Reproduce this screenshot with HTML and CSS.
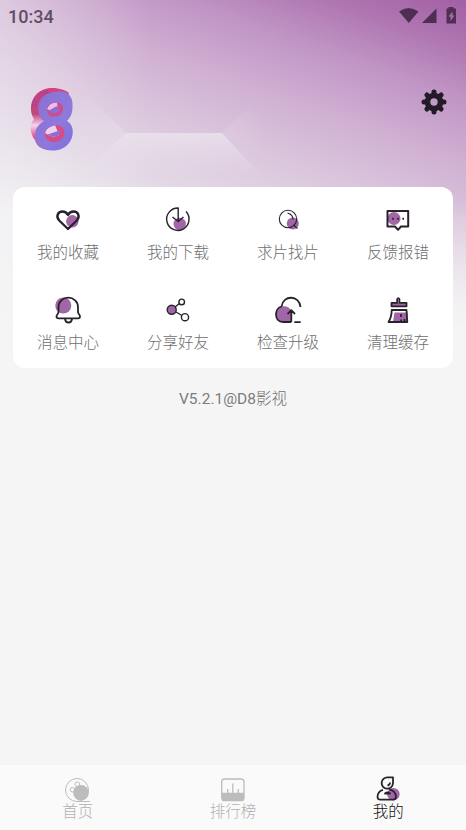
FILE: index.html
```html
<!DOCTYPE html>
<html lang="zh-CN">
<head>
<meta charset="utf-8">
<meta name="viewport" content="width=device-width, initial-scale=1">
<title>我的</title>
<link rel="stylesheet" href="styles.css">
</head>
<body>
<div class="app">
  <svg class="backdrop" viewBox="0 0 466 330" aria-hidden="true">
    <defs>
      <linearGradient id="sky" gradientUnits="userSpaceOnUse" x1="466" y1="0" x2="350" y2="331">
        <stop offset="0" stop-color="#a25fa4"/>
        <stop offset=".13" stop-color="#af76b2"/>
        <stop offset=".28" stop-color="#c197c5"/>
        <stop offset=".44" stop-color="#d0b0d3"/>
        <stop offset=".6" stop-color="#dac5dc"/>
        <stop offset=".78" stop-color="#e3d8e5"/>
        <stop offset=".9" stop-color="#ebe7ed"/>
        <stop offset="1" stop-color="#f3f2f4"/>
      </linearGradient>
      <linearGradient id="left" gradientUnits="userSpaceOnUse" x1="0" y1="0" x2="150" y2="0">
        <stop offset="0" stop-color="#f1eff3" stop-opacity=".4"/>
        <stop offset="1" stop-color="#f1eff3" stop-opacity="0"/>
      </linearGradient>
      <linearGradient id="fade" x1="0" y1="0" x2="0" y2="1">
        <stop offset="0" stop-color="#f5f5f5" stop-opacity="0"/>
        <stop offset="1" stop-color="#f5f5f5"/>
      </linearGradient>
      <linearGradient id="plate" x1="0" y1="0" x2="0" y2="1">
        <stop offset="0" stop-color="#ebe3ed" stop-opacity=".85"/>
        <stop offset=".8" stop-color="#e9e3ea" stop-opacity="0"/>
      </linearGradient>
      <radialGradient id="slope" gradientUnits="userSpaceOnUse" cx="120" cy="132" r="52">
        <stop offset="0" stop-color="#e8deea" stop-opacity=".5"/>
        <stop offset="1" stop-color="#e8deea" stop-opacity="0"/>
      </radialGradient>
      <radialGradient id="shade" gradientUnits="userSpaceOnUse" cx="224" cy="133" r="42">
        <stop offset="0" stop-color="#e6d8e8" stop-opacity=".3"/>
        <stop offset="1" stop-color="#e6d8e8" stop-opacity="0"/>
      </radialGradient>
    </defs>
    <rect width="466" height="330" fill="url(#sky)"/>
    <rect width="150" height="330" fill="url(#left)"/>
    <rect y="200" width="466" height="130" fill="url(#fade)"/>
    <path d="M68 76 126 133 66 187V76z" fill="url(#slope)"/>
    <path d="M222 133 268 87V180z" fill="url(#shade)"/>
    <path d="M126 133H222L272 187H66z" fill="url(#plate)"/>
  </svg>

  <header class="status">
    <span class="clock">10:34</span>
    <svg class="signals" viewBox="0 0 60 18" aria-hidden="true">
      <path d="M1 4.500Q10.500-2.500 20.500 4.500L10.800 16z"/>
      <path d="M38.500 1.500V16H24z"/>
      <path d="M50.500 0h5v1.500h2.500V16.500h-9.500V1.500h2zM54.500 4.500l-4 5h2v4.500l4-5.500h-2z" fill-rule="evenodd"/>
    </svg>
  </header>

  <section class="profile">
    <svg class="avatar" viewBox="0 0 46 66" aria-label="8">
      <defs>
        <linearGradient id="side" x1="0" y1="0" x2="0" y2="1">
          <stop offset="0" stop-color="#d8417e"/><stop offset=".42" stop-color="#c0467f"/>
          <stop offset=".6" stop-color="#f3d3ee"/><stop offset=".78" stop-color="#e2588f"/><stop offset="1" stop-color="#a44fb5"/>
        </linearGradient>
        <linearGradient id="face" x1="0" y1="0" x2="1" y2="1">
          <stop offset="0" stop-color="#8a6fd2"/><stop offset=".6" stop-color="#8e79dd"/><stop offset="1" stop-color="#7d70dc"/>
        </linearGradient>
      </defs>
      <path d="M18 1.500C28 0 36 3 40 6L20 63C10 62 7 57 6 53C1 47 0 38 5 32C-1 24 1 5 18 1.500z" fill="url(#side)"/>
      <path d="M6 20C8 10 14 7 20 5M3 20C4 10 12 5 19 3.500" fill="none" stroke="#8a4a96"/>
      <ellipse cx="26" cy="22" rx="9.500" ry="9" fill="#cc4d8a"/>
      <ellipse cx="26" cy="47" rx="11" ry="10" fill="#d64c86"/>
      <path d="M18 22Q21 15 28 15.500L29 24Q23 25 18 22z" fill="#efbde5"/>
      <path d="M16 46Q18 39 26 38L30 48Q24 52 16 46z" fill="#f1d0ea"/>
      <path d="M19 24l9-5 3 5-6 3zM17 48l9-3 7-2-5 7z" fill="#8f6dd0"/>
      <path fill="url(#face)" fill-rule="evenodd" d="M28 4.500C38 3 44.500 9 43.500 20C43.500 27 41 31 38 34C43 37 44.500 42 43.500 48C42 57 35 62.500 26 63.500C14 64.500 6 58 6 49C6 41 10 37 15 34C8 29 7 15 15 9C19 6 24 5 28 4.500zM26.500 15.500C21 16 17.500 19 18 23.500C18.500 28 22 30 26.500 29.500C31 29 34 26 34 21.500C34 17 31 15 26.500 15.500zM26 38.500C20 39.500 15.500 43 16 48C16.500 53 21 55.500 26 55C31.500 54.500 36 50 35.500 45C35 40 31 37.500 26 38.500z"/>
    </svg>
    <svg class="gear" viewBox="-13 -13 26 26" aria-label="设置">
      <g fill="none" stroke="#241b28" stroke-width="5" stroke-linecap="round">
        <path d="M0-10V-7M0 10V7M-10 0H-7M10 0H7M-7.100-7.100-5-5M7.100-7.100 5-5M-7.100 7.100-5 5M7.100 7.100 5 5"/>
        <circle r="6.500" stroke-width="5.600"/>
      </g>
    </svg>
  </section>

  <main class="menu">
    <a class="item">
      <svg viewBox="0 0 30 30"><circle class="dot" cx="19.300" cy="17.300" r="6.200"/><path class="line bold" d="M15 25 6.200 16.500C2.500 12.500 5 7.500 9.300 7.500C12 7.500 14 9 15 11C16 9 18 7.500 20.700 7.500C25 7.500 27.500 12.500 23.800 16.500z"/></svg>
      <span>我的收藏</span>
    </a>
    <a class="item">
      <svg viewBox="0 0 30 30"><circle class="dot" cx="16.700" cy="20" r="6.200"/><path class="line thin" d="M15.200 17.500V4A11.200 11.200 0 1 0 23 7.500M9.500 13 15.200 17.500 20.500 13"/></svg>
      <span>我的下载</span>
    </a>
    <a class="item">
      <svg viewBox="0 0 30 30"><circle class="dot" cx="19.800" cy="19.500" r="6"/><g class="line hair"><circle cx="15" cy="15" r="8.700"/><path d="M14.500 9Q20 10.500 20 15.500M20.500 21 24.500 24.500"/></g></svg>
      <span>求片找片</span>
    </a>
    <a class="item">
      <svg viewBox="0 0 30 30"><circle class="dot" cx="11" cy="14.500" r="6.500"/><path class="line thick" d="M4.500 7H25.200V22.500H18L15 25.800 12 22.500H4.500z"/><path class="line thick" d="M9.200 14.700h1.600M14.300 14.700h1.600M19.400 14.700h1.600"/></svg>
      <span>反馈报错</span>
    </a>
    <a class="item">
      <svg viewBox="0 0 30 30"><circle class="dot" cx="10.300" cy="10.500" r="8"/><path class="line" d="M5.500 17V12A9.700 9.300 0 0 1 25 12V17C25 19 27 19.500 27 21.500Q27 23.300 25 23.300H5.500Q3.500 23.300 3.500 21.500C3.500 19.500 5.500 19 5.500 17zM12 24Q12.500 27.500 15.500 27.500Q18.500 27.500 19 24"/></svg>
      <span>消息中心</span>
    </a>
    <a class="item">
      <svg viewBox="0 0 30 30"><path class="line thin" d="M12 12 16.500 8.500M13 17 19 20.500"/><circle class="dot line thin" cx="8.700" cy="14.800" r="4.500"/><g class="line thin"><circle cx="18.700" cy="6.900" r="2.800"/><circle cx="22" cy="22.200" r="3.600"/></g></svg>
      <span>分享好友</span>
    </a>
    <a class="item">
      <svg viewBox="0 0 30 30"><path class="dot" d="M8 11.500Q15 10 18 15L19 27H10Q3 26 2.500 19 3 13 8 11.500z"/><path class="line" d="M27.500 12C26.500 0 10 -.5 8.500 11.500C1 13.500 1 27 10 27H18.300M18.300 27V15.500M14.500 19 18.300 15.200 22 19M21.300 27.200H27.700"/></svg>
      <span>检查升级</span>
    </a>
    <a class="item">
      <svg viewBox="0 0 30 30"><path class="dot" d="M9 8h15v3.500H9zM11.500 17.500h13v9.500H10z"/><path class="line" d="M14.200 7.800V4.200Q15.300 2 16.400 4.200V7.800H23.500V11.300H8.500V7.800zM8.700 15H23.500L24.300 27H5.500Q8.700 22 8.700 15zM18 19V22M18 24.500V27M21.500 24v3"/></svg>
      <span>清理缓存</span>
    </a>
  </main>

  <p class="version"><span class="number">V5.2.1@D8</span>影视</p>

  <nav class="tabs">
    <a class="tab">
      <svg viewBox="0 0 30 28"><g fill="none" stroke="#bcbcbc" stroke-width="1"><circle cx="14" cy="14" r="11.500"/><circle cx="14.300" cy="8.200" r="2.300"/><circle cx="9.500" cy="13.700" r="2.300"/><path d="M14 25.500H27"/></g><circle cx="18" cy="16.800" r="7.800" fill="#bcbcbc"/></svg>
      <span>首页</span>
    </a>
    <a class="tab">
      <svg viewBox="0 0 30 28"><path d="M4 16.700H26V22Q26 25 24 25H6Q4 25 4 22z" fill="#bcbcbc"/><g fill="none" stroke="#bcbcbc" stroke-width="1.300"><rect x="3.700" y="3" width="22.300" height="21.700" rx="3"/><path d="M9.700 13V17M14.800 7.500V17M20.300 13V17"/></g></svg>
      <span>排行榜</span>
    </a>
    <a class="tab current">
      <svg viewBox="0 0 30 28"><circle class="dot" cx="20.400" cy="18.200" r="6.200"/><path class="line" d="M20 1.300H14.500A5.700 5.700 0 1 0 20 7.500zM14.500 9.500Q17 9 17 6.500M10 13.800C6.500 14.500 4.300 18 4.500 21Q4.700 23.700 7.500 23.700H20Q23 23.700 23 21C22.800 17 20 14 16.500 13.500M12 17.500Q14.500 15.500 17 17.500z"/></svg>
      <span>我的</span>
    </a>
  </nav>
</div>
</body>
</html>
```
FILE: styles.css
```css
* {
  box-sizing: border-box;
}

body {
  margin: 0;
  background: #f5f5f5;
  font-family: Roboto, "Noto Sans CJK SC", sans-serif;
  font-weight: 300;
}

.app {
  position: relative;
  display: flex;
  flex-direction: column;
  height: 830px;
  isolation: isolate;
}

.backdrop {
  position: absolute;
  inset: 0 0 auto;
  width: 100%;
  height: 330px;
  z-index: -1;
}

.status {
  display: flex;
  justify-content: space-between;
  align-items: center;
  height: 32px;
  padding: 0 8px;
}

.clock {
  font-size: 18px;
  font-weight: 500;
  color: #5f4e65;
}

.signals {
  width: 60px;
  height: 18px;
  margin-top: -1px;
  fill: #4f2e54;
}

.profile {
  display: flex;
  justify-content: space-between;
  align-items: flex-start;
  height: 155px;
  padding: 55px 19px 0 29px;
}

.avatar {
  width: 46px;
  height: 66px;
}

.gear {
  width: 26px;
  height: 26px;
  margin-top: 2px;
}

.menu {
  display: grid;
  grid-template-columns: repeat(4, 1fr);
  grid-template-rows: 91px 90px;
  margin: 0 13px;
  background: #fff;
  border-radius: 12px;
}

.item {
  display: flex;
  flex-direction: column;
  align-items: center;
  padding-top: 17px;
  font-size: 15.500px;
  line-height: 24px;
  color: #6e6e6e;
}

.item svg {
  width: 30px;
  height: 30px;
  margin-bottom: 7px;
}

.item:nth-child(n + 5) svg {
  margin-bottom: 6px;
}

.dot {
  fill: #a066a6;
}

.line {
  fill: none;
  stroke: #29222c;
  stroke-width: 1.800;
  stroke-linejoin: round;
}

.line.bold {
  stroke-width: 2.400;
}

.line.thick {
  stroke-width: 2;
}

.line.thin {
  stroke-width: 1.400;
}

.line.hair {
  stroke-width: 1.100;
}

.dot.line {
  fill: #a066a6;
}

.version {
  margin: 19px 0 0;
  text-align: center;
  font-size: 15.500px;
  line-height: 24px;
  color: #6e6e6e;
}

.number {
  font-weight: 400;
  color: #7c7c7c;
}

.tabs {
  display: grid;
  grid-template-columns: repeat(3, 1fr);
  height: 65px;
  margin-top: auto;
  background: #fafafa;
}

.tab {
  display: flex;
  flex-direction: column;
  align-items: center;
  padding-top: 11px;
  font-size: 15.500px;
  line-height: 20px;
  color: #b0b0b0;
}

.tab svg {
  width: 30px;
  height: 28px;
  margin-bottom: -2px;
}

.tab.current {
  color: #111;
}
```
